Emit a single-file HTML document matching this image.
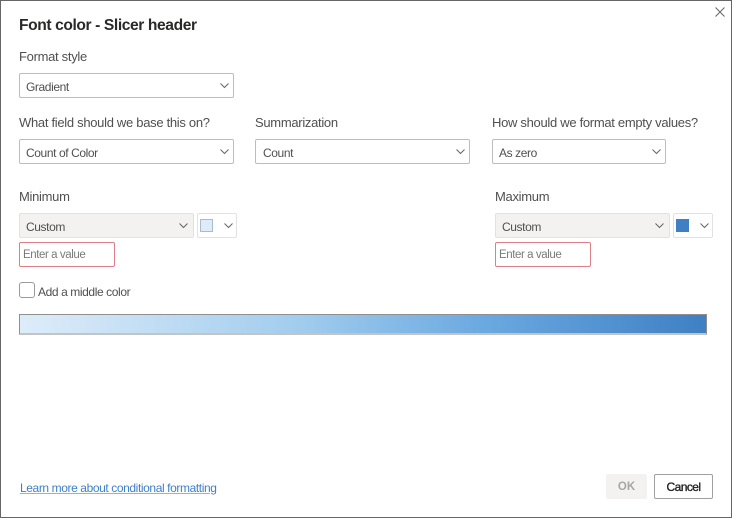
<!DOCTYPE html>
<html><head><meta charset="utf-8"><style>
html,body{margin:0;padding:0;background:#fff}
#p{position:relative;width:732px;height:518px;overflow:hidden;background:#fff;font-family:"Liberation Sans",sans-serif;color:#505050;box-sizing:border-box}
#f{position:absolute;left:0;top:0;width:732px;height:518px;box-sizing:border-box;border:1px solid #666}
.t{position:absolute;white-space:nowrap;font-size:12px;line-height:16px;letter-spacing:-.4px}
.l{font-size:13px;color:#505050;letter-spacing:-.3px}
.b{position:absolute;box-sizing:border-box;border:1px solid #bdbdbd;border-radius:2px;background:#fff;height:25px}
.g{background:#f3f2f1;border-color:#e4e2e0}
.r{position:absolute;box-sizing:border-box;border:1px solid #dc7f86;border-radius:2px;height:25px;width:96px;top:242px}
.e{color:#7a7a7a;font-size:11.5px;letter-spacing:-.42px}
svg{position:absolute}
</style></head><body><div id="p">
<div id="f"></div>
<div class="t" style="left:19px;top:17px;font-size:15.6px;line-height:18px;font-weight:bold;color:#2a2928;letter-spacing:-.4px">Font color - Slicer header</div>
<svg style="left:715px;top:7px" width="10" height="10" viewBox="0 0 10 10"><path d="M.5 .5L9.5 9.5M9.5 .5L.5 9.5" stroke="#666" stroke-width="1" fill="none"/></svg>

<div class="t l" style="left:19px;top:49px">Format style</div>
<div class="b" style="left:19px;top:73px;width:215px"></div>
<div class="t" style="left:26px;top:79px">Gradient</div>
<svg style="left:220px;top:83px" width="9" height="6" viewBox="0 0 9 6"><path d="M.5 .5L4.5 4.5L8.5 .5" stroke="#666" fill="none"/></svg>

<div class="t l" style="left:19px;top:115px">What field should we base this on?</div>
<div class="b" style="left:19px;top:139px;width:215px"></div>
<div class="t" style="left:26px;top:145px">Count of Color</div>
<svg style="left:220px;top:149px" width="9" height="6" viewBox="0 0 9 6"><path d="M.5 .5L4.5 4.5L8.5 .5" stroke="#666" fill="none"/></svg>

<div class="t l" style="left:255px;top:115px">Summarization</div>
<div class="b" style="left:255px;top:139px;width:215px"></div>
<div class="t" style="left:263px;top:145px">Count</div>
<svg style="left:456px;top:149px" width="9" height="6" viewBox="0 0 9 6"><path d="M.5 .5L4.5 4.5L8.5 .5" stroke="#666" fill="none"/></svg>

<div class="t l" style="left:492px;top:115px">How should we format empty values?</div>
<div class="b" style="left:492px;top:139px;width:174px"></div>
<div class="t" style="left:499px;top:145px">As zero</div>
<svg style="left:652px;top:149px" width="9" height="6" viewBox="0 0 9 6"><path d="M.5 .5L4.5 4.5L8.5 .5" stroke="#666" fill="none"/></svg>

<div class="t l" style="left:19px;top:189px">Minimum</div>
<div class="b g" style="left:19px;top:213px;width:175px"></div>
<div class="t" style="left:26px;top:219px">Custom</div>
<svg style="left:179px;top:223px" width="9" height="6" viewBox="0 0 9 6"><path d="M.5 .5L4.5 4.5L8.5 .5" stroke="#666" fill="none"/></svg>
<div class="b" style="left:197px;top:213px;width:40px;border-color:#e4e2e0"></div>
<div style="position:absolute;left:200px;top:219px;width:13px;height:13px;box-sizing:border-box;background:#deecf9;border:1px solid #a9bccd"></div>
<svg style="left:224px;top:223px" width="9" height="6" viewBox="0 0 9 6"><path d="M.5 .5L4.5 4.5L8.5 .5" stroke="#666" fill="none"/></svg>
<div class="r" style="left:19px"></div>
<div class="t e" style="left:23px;top:247px">Enter a value</div>

<div class="t l" style="left:495px;top:189px">Maximum</div>
<div class="b g" style="left:495px;top:213px;width:175px"></div>
<div class="t" style="left:502px;top:219px">Custom</div>
<svg style="left:655px;top:223px" width="9" height="6" viewBox="0 0 9 6"><path d="M.5 .5L4.5 4.5L8.5 .5" stroke="#666" fill="none"/></svg>
<div class="b" style="left:673px;top:213px;width:40px;border-color:#e4e2e0"></div>
<div style="position:absolute;left:676px;top:219px;width:13px;height:13px;background:#3f80c4"></div>
<svg style="left:700px;top:223px" width="9" height="6" viewBox="0 0 9 6"><path d="M.5 .5L4.5 4.5L8.5 .5" stroke="#666" fill="none"/></svg>
<div class="r" style="left:495px"></div>
<div class="t e" style="left:499px;top:247px">Enter a value</div>

<div class="b" style="left:19px;top:282px;width:16px;height:16px;border-color:#9a9a9a;border-radius:3px"></div>
<div class="t" style="left:38px;top:284px">Add a middle color</div>

<div style="position:absolute;left:19px;top:314px;width:688px;height:21px;box-sizing:border-box;border:1px solid #8f8f8f;border-bottom:2px solid #c4c4c4;background:linear-gradient(90deg,#deecf9 0%,#a3cdee 40%,#6aa8e0 68%,#3f80c4 100%)"></div>

<div class="t" style="left:20px;top:480px;color:#3f7fc8;text-decoration:underline;text-decoration-color:#8ab4e4">Learn more about conditional formatting</div>

<div style="position:absolute;left:606px;top:474px;width:41px;height:25px;background:#f3f2f1;border-radius:2px"></div>
<div class="t" style="left:606px;top:479px;width:41px;text-align:center;font-weight:bold;font-size:11.5px;color:#a6a6a6;letter-spacing:0">OK</div>
<div class="b" style="left:654px;top:474px;width:59px;border-color:#a0a0a0"></div>
<div class="t" style="left:654px;top:479px;width:59px;text-align:center;font-size:12px;color:#252423;letter-spacing:-.55px;-webkit-text-stroke:.35px #252423">Cancel</div>
</div></body></html>
